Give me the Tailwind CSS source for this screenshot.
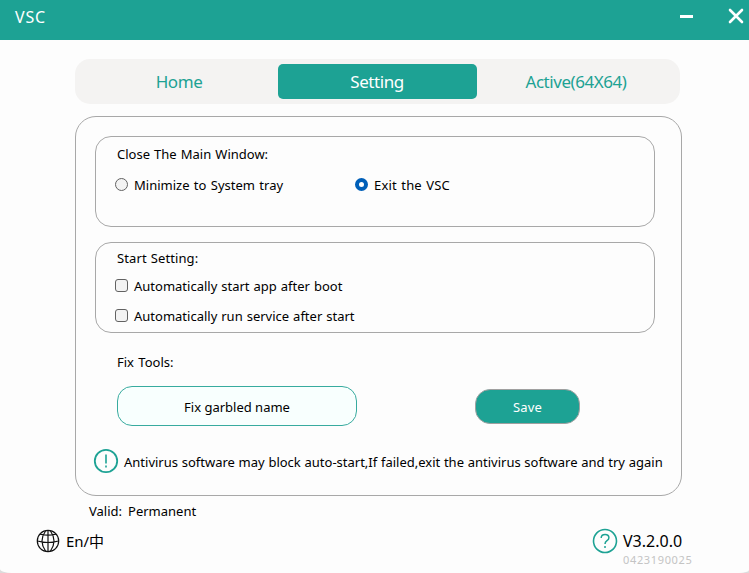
<!DOCTYPE html>
<html lang="en">
<head>
<meta charset="utf-8">
<title>VSC</title>
<script src="https://cdn.jsdelivr.net/npm/@tailwindcss/browser@4"></script>
</head>
<body class="bg-[#dcdcdc] h-[573px] overflow-hidden">
<div class="w-[749px] h-[573px] overflow-hidden rounded-b-[12px_4px] [border-bottom-left-radius:12px_4px] [border-bottom-right-radius:10px_3px] bg-[#fdfdfd] flex flex-col whitespace-nowrap text-black text-[13px] leading-5 font-['Noto_Sans','Noto_Sans_CJK_SC',sans-serif]">
  <header class="h-10 shrink-0 bg-[#1da294] flex justify-between pl-[15px]">
    <h1 class="text-white text-[16px] leading-[34px] tracking-[0.8px]">VSC</h1>
    <div class="flex">
      <svg class="w-[15px] h-10 mr-[33px]" viewBox="0 0 15 40"><path d="M1 15h13v3H1z" fill="#fff"/></svg>
      <svg class="w-[22px] h-10" viewBox="0 0 22 40"><path d="M3 10 15 22M15 10 3 22" stroke="#fff" stroke-width="2.6" stroke-linecap="round"/></svg>
    </div>
  </header>
  <nav class="mt-[19px] ml-[75px] w-[605px] h-[45px] shrink-0 rounded-[15px] bg-[#f4f3f2] flex py-[5px] text-[17px] leading-[35px] tracking-[-0.45px] text-[#1da294] text-center">
    <div class="w-[203px] pl-[5px]"><span>Home</span></div>
    <div class="w-[199px] pr-px rounded-[5px] bg-[#1da294] text-white"><span>Setting</span></div>
    <div class="w-[203px] pr-[5px]"><span>Active(64X64)</span></div>
  </nav>
  <main class="mt-3 ml-[75px] w-[607px] h-[380px] shrink-0 border border-[#a8a8a8] rounded-[21px] px-[19px] pt-[19px]">
    <section class="w-[560px] h-[91px] border border-[#a8a8a8] rounded-[16px] pt-[7px]">
      <h2 class="ml-[21px] [word-spacing:0.7px]"><span>Close The Main Window:</span></h2>
      <div class="flex mt-[11px] pl-[19px] [word-spacing:1px]">
        <label class="flex items-center w-[240px]"><i class="size-[13px] -mt-px rounded-full border border-[#626262] bg-[#f3f3f3] mr-[6px]"></i><span>Minimize to System tray</span></label>
        <label class="flex items-center"><i class="size-[13px] -mt-px rounded-full border-4 border-[#005fb8] bg-white mr-[6px]"></i><span class="tracking-[0.15px]">Exit the VSC</span></label>
      </div>
    </section>
    <section class="mt-[15px] w-[560px] h-[91px] border border-[#a8a8a8] rounded-[16px] pt-[5px] [word-spacing:0.6px]">
      <h2 class="ml-[21px] tracking-[0.1px]"><span>Start Setting:</span></h2>
      <label class="flex items-center mt-2 pl-[19px]"><i class="size-[13px] -mt-px rounded-[3px] border border-[#626262] bg-[#f3f3f3] mr-[6px]"></i><span>Automatically start app after boot</span></label>
      <label class="flex items-center mt-[10px] pl-[19px]"><i class="size-[13px] -mt-px rounded-[3px] border border-[#626262] bg-[#f3f3f3] mr-[6px]"></i><span>Automatically run service after start</span></label>
    </section>
    <h2 class="mt-[19px] ml-[22px] [word-spacing:1px]"><span>Fix Tools:</span></h2>
    <div class="mt-[14px] ml-[22px] flex items-center">
      <button class="w-[240px] h-10 pt-0.5 border border-[#38ab9f] bg-[#f8fffe] rounded-[15px]"><span>Fix garbled name</span></button>
      <button class="ml-[118px] w-[105px] h-[35px] pt-0.5 border border-[#a0a0a0] bg-[#1da294] text-white rounded-[15px]"><span class="tracking-[0.2px]">Save</span></button>
    </div>
    <div class="mt-[22px] ml-[-2px] flex items-center">
      <svg class="size-[26px] shrink-0 mr-[5px]" viewBox="0 0 26 26" fill="none" stroke="#1da294"><circle cx="13" cy="13" r="11.2" stroke-width="1.8"/><path d="M13 6.500v9M13 17.500v2" stroke-width="1.6"/></svg>
      <span class="mt-0.5 [word-spacing:0.33px]">Antivirus software may block auto-start,If failed,exit the antivirus software and try again</span>
    </div>
  </main>
  <footer class="flex flex-col">
    <div class="mt-[5px] ml-[89px] flex gap-[6px]"><span>Valid:</span><span>Permanent</span></div>
    <div class="flex ml-[36px] mt-[7px] h-[26px]">
      <svg class="size-6 mt-px mr-[6px]" viewBox="0 0 24 24" fill="none" stroke="#111" stroke-width="1.2"><circle cx="12" cy="12" r="10.7"/><path d="M12 1.500v21M1.500 12q10.500 3 21 0M9.500 2Q2.500 12 9.500 22M14.500 2Q21.500 12 14.500 22M4 5.200q8 2 16 0"/></svg>
      <span class="w-[526px] text-[15px] leading-[27px] tracking-[-0.1px]"><span>En/中</span></span>
      <svg class="size-[26px] mr-[5px]" viewBox="0 0 26 26" fill="none" stroke="#1da294"><circle cx="13" cy="13" r="11.500" stroke-width="1.600"/><path d="M9.200 10q0-3.600 3.900-3.600 3.800 0 3.800 3.300 0 1.700-1.900 3-2 1.400-2 3.300M13 18v2" stroke-width="1.500"/></svg>
      <span class="text-[16px] leading-[26px]"><span>V3.2.0.0</span></span>
    </div>
    <div class="ml-[623px] mt-[-2px] text-[11px] leading-[15px] tracking-[0.65px] text-[#c4c4c4]"><span>0423190025</span></div>
  </footer>
</div>
</body>
</html>
